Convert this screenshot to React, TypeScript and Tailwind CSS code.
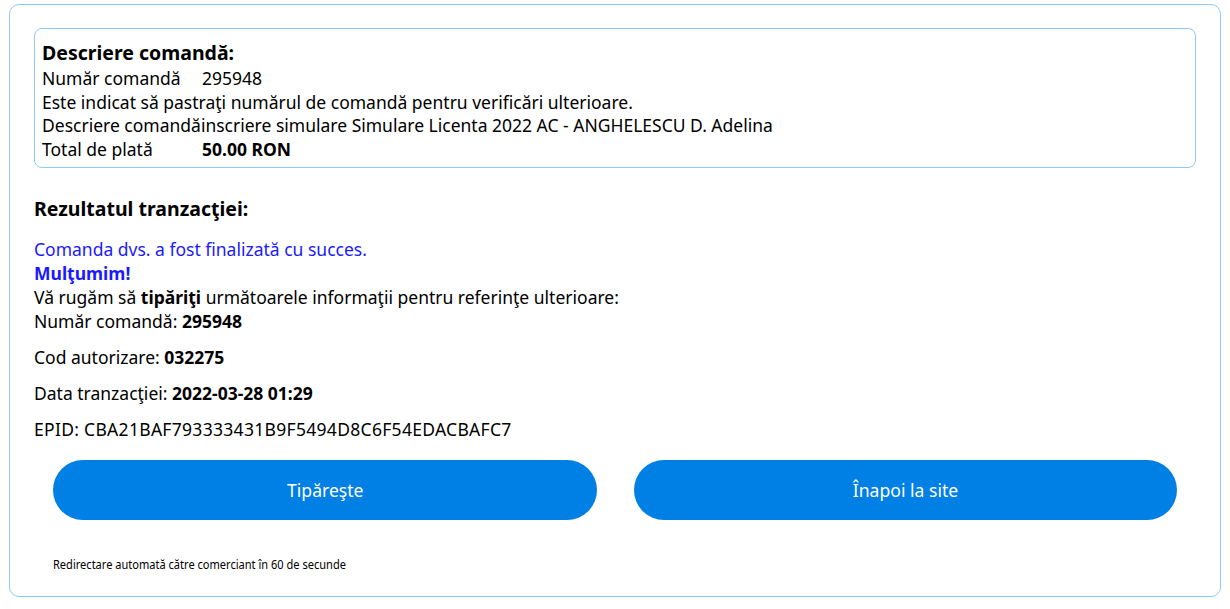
export default function App() {
  return (
    <div className="bg-white px-[9px] pt-[4px] pb-[11px] font-['Noto_Sans',sans-serif] text-[17.5px] text-black">
      <div className="rounded-[10px] border border-[#90c8f6] px-[24px] pt-[23px] pb-[24px]">
        <div className="rounded-[8px] border border-[#90c8f6] px-[7px] pt-[9px] pb-[5px] leading-[23.7px]">
          <h2 className="text-[19.5px] font-bold leading-[29px]">Descriere comandă:</h2>
          <table>
            <tbody>
              <tr>
                <td className="w-[160px] p-0">Număr comandă</td>
                <td className="p-0">295948</td>
              </tr>
            </tbody>
          </table>
          <p>Este indicat să pastraţi numărul de comandă pentru verificări ulterioare.</p>
          <p>Descriere comandăinscriere simulare Simulare Licenta 2022 AC - ANGHELESCU D. Adelina</p>
          <table>
            <tbody>
              <tr>
                <td className="w-[160px] p-0">Total de plată</td>
                <td className="p-0 font-bold">50.00 RON</td>
              </tr>
            </tbody>
          </table>
        </div>

        <h2 className="mt-[28px] text-[19.5px] font-bold leading-[26px]">Rezultatul tranzacţiei:</h2>
        <div className="mt-[15px] leading-[24px]">
          <p className="text-[#1a1aff]">Comanda dvs. a fost finalizată cu succes.</p>
          <p className="font-bold text-[#1a1aff]">Mulţumim!</p>
          <p>
            Vă rugăm să <b>tipăriţi</b> următoarele informaţii pentru referinţe ulterioare:
          </p>
          <p>
            Număr comandă: <b>295948</b>
          </p>
          <p className="mt-[12px]">
            Cod autorizare: <b>032275</b>
          </p>
          <p className="mt-[12px]">
            Data tranzacţiei: <b>2022-03-28 01:29</b>
          </p>
          <p className="mt-[12px] tracking-[0.3px]">EPID: CBA21BAF793333431B9F5494D8C6F54EDACBAFC7</p>
        </div>

        <div className="mt-[19px] grid grid-cols-2 gap-[37px] px-[19px]">
          <button className="h-[60px] rounded-full bg-[#007fe4] text-[18.5px] text-white">
            <span className="inline-block scale-x-[0.95]">Tipăreşte</span>
          </button>
          <button className="h-[60px] rounded-full bg-[#007fe4] text-[18.5px] text-white">
            <span className="inline-block scale-x-[0.95]">Înapoi la site</span>
          </button>
        </div>

        <p className="mt-[36px] pl-[19px] text-[13px] leading-[16px]">
          <span className="inline-block origin-left scale-x-[0.85]">
            Redirectare automată către comerciant în 60 de secunde
          </span>
        </p>
      </div>
    </div>
  )
}
